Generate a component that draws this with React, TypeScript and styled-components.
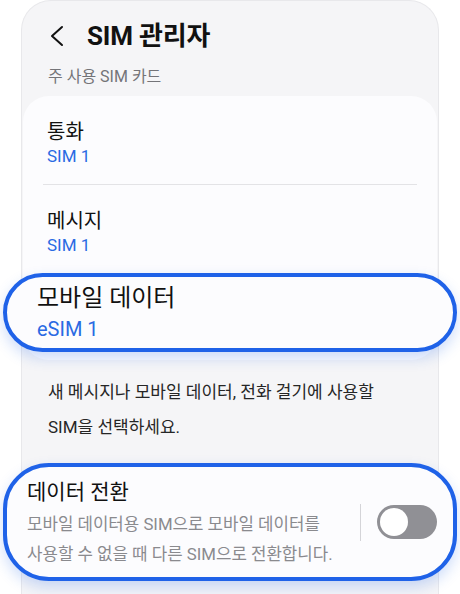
import styled, { createGlobalStyle } from 'styled-components';

const GlobalStyle = createGlobalStyle`
	html, body {
		margin: 0;
		padding: 0;
		background: #ffffff;
	}
	body {
		font-family: Roboto, 'Noto Sans CJK KR', sans-serif;
		color: #111111;
	}
	* {
		box-sizing: border-box;
	}
`;

const Page = styled.div`
	width: 460px;
	height: 594px;
	overflow: hidden;
	padding: 0 21px;
	background: #ffffff;
`;

const Frame = styled.div`
	min-height: 640px;
	background: #f5f5f7;
	border: 1px solid #e8e8eb;
	border-bottom: none;
	border-radius: 30px 30px 0 0;
	display: flex;
	flex-direction: column;
`;

const Header = styled.header`
	display: flex;
	align-items: center;
	gap: 22px;
	padding: 17px 0 0 27px;
	height: 57px;
	align-items: flex-start;
`;

const Title = styled.h1`
	margin: 0;
	font-size: 26px;
	font-weight: 700;
	line-height: 36px;
	letter-spacing: -0.2px;
`;

const BackButton = styled.div`
	height: 36px;
	display: flex;
	align-items: center;
`;

const SectionLabel = styled.div`
	padding: 8px 26px 0;
	font-size: 16px;
	line-height: 22px;
	color: #747478;
`;

const Card = styled.section`
	margin: 8px 1px 0;
	background: #fcfcfe;
	border-radius: 26px;
	padding: 0 0 8px;
	display: flex;
	flex-direction: column;
`;

const Row = styled.div`
	height: 88px;
	padding: 7px 24px 0;
	display: flex;
	flex-direction: column;
	justify-content: center;
`;

const Divider = styled.div`
	height: 1px;
	margin: 0 20px;
	background: #e3e3e6;
`;

const Highlight = styled.div<{ $inset: number; $radius: number }>`
	margin: 0 ${(p) => p.$inset}px;
	border: 4px solid #1f62e8;
	border-radius: ${(p) => p.$radius}px;
	background: #fcfcfe;
	box-shadow: 0 6px 14px rgba(31, 98, 232, 0.22);
`;

const PillRow = styled(Highlight)`
	height: 79px;
	padding: 0 30px;
	display: flex;
	flex-direction: column;
	justify-content: center;
	gap: 3px;
`;

const ItemTitle = styled.div<{ $size?: number }>`
	font-size: ${(p) => p.$size ?? 20}px;
	line-height: ${(p) => (p.$size ?? 20) + 6}px;
	color: #111111;
`;

const ItemValue = styled.div<{ $size?: number }>`
	font-size: ${(p) => p.$size ?? 17}px;
	line-height: ${(p) => (p.$size ?? 17) + 6}px;
	color: #2a6ae3;
`;

const Description = styled.p`
	margin: 0;
	padding: 15px 26px 18px;
	font-size: 17px;
	line-height: 35px;
	color: #262626;
`;

const SwitchCard = styled(Highlight)`
	height: 118px;
	padding: 0 16px 0 20px;
	display: flex;
	align-items: center;
`;

const SwitchText = styled.div`
	flex: 1;
	display: flex;
	flex-direction: column;
	gap: 3px;
	padding-top: 4px;
`;

const SwitchDesc = styled.div`
	font-size: 16.8px;
	line-height: 30px;
	color: #8a8a8e;
	white-space: nowrap;
`;

const VRule = styled.div`
	width: 1px;
	height: 37px;
	background: #d4d4d8;
	margin: 0 16px 0 10px;
`;

const Toggle = styled.div<{ $on: boolean }>`
	width: 60px;
	height: 34px;
	border-radius: 17px;
	padding: 3px;
	background: ${(p) => (p.$on ? '#1f62e8' : '#909095')};
	display: flex;
	justify-content: ${(p) => (p.$on ? 'flex-end' : 'flex-start')};
`;

const Knob = styled.div`
	width: 28px;
	height: 28px;
	border-radius: 50%;
	background: #ffffff;
`;

function BackIcon() {
	return (
		<svg width="16" height="22" viewBox="0 0 16 22" fill="none">
			<path d="M13 2 L3 11 L13 20" stroke="#111" strokeWidth="2" strokeLinecap="round" strokeLinejoin="round" />
		</svg>
	);
}

export default function App() {
	return (
		<>
			<GlobalStyle />
			<Page>
				<Frame>
					<Header>
						<BackButton>
							<BackIcon />
						</BackButton>
						<Title>SIM 관리자</Title>
					</Header>
					<SectionLabel>주 사용 SIM 카드</SectionLabel>
					<Card>
						<Row>
							<ItemTitle>통화</ItemTitle>
							<ItemValue>SIM 1</ItemValue>
						</Row>
						<Divider />
						<Row>
							<ItemTitle>메시지</ItemTitle>
							<ItemValue>SIM 1</ItemValue>
						</Row>
						<PillRow $inset={-20} $radius={40}>
							<ItemTitle $size={24}>모바일 데이터</ItemTitle>
							<ItemValue $size={20}>eSIM 1</ItemValue>
						</PillRow>
					</Card>
					<Description>
						새 메시지나 모바일 데이터, 전화 걸기에 사용할
						<br />
						SIM을 선택하세요.
					</Description>
					<SwitchCard $inset={-19} $radius={46}>
						<SwitchText>
							<ItemTitle $size={21}>데이터 전환</ItemTitle>
							<SwitchDesc>
								모바일 데이터용 SIM으로 모바일 데이터를
								<br />
								사용할 수 없을 때 다른 SIM으로 전환합니다.
							</SwitchDesc>
						</SwitchText>
						<VRule />
						<Toggle $on={false}>
							<Knob />
						</Toggle>
					</SwitchCard>
				</Frame>
			</Page>
		</>
	);
}
